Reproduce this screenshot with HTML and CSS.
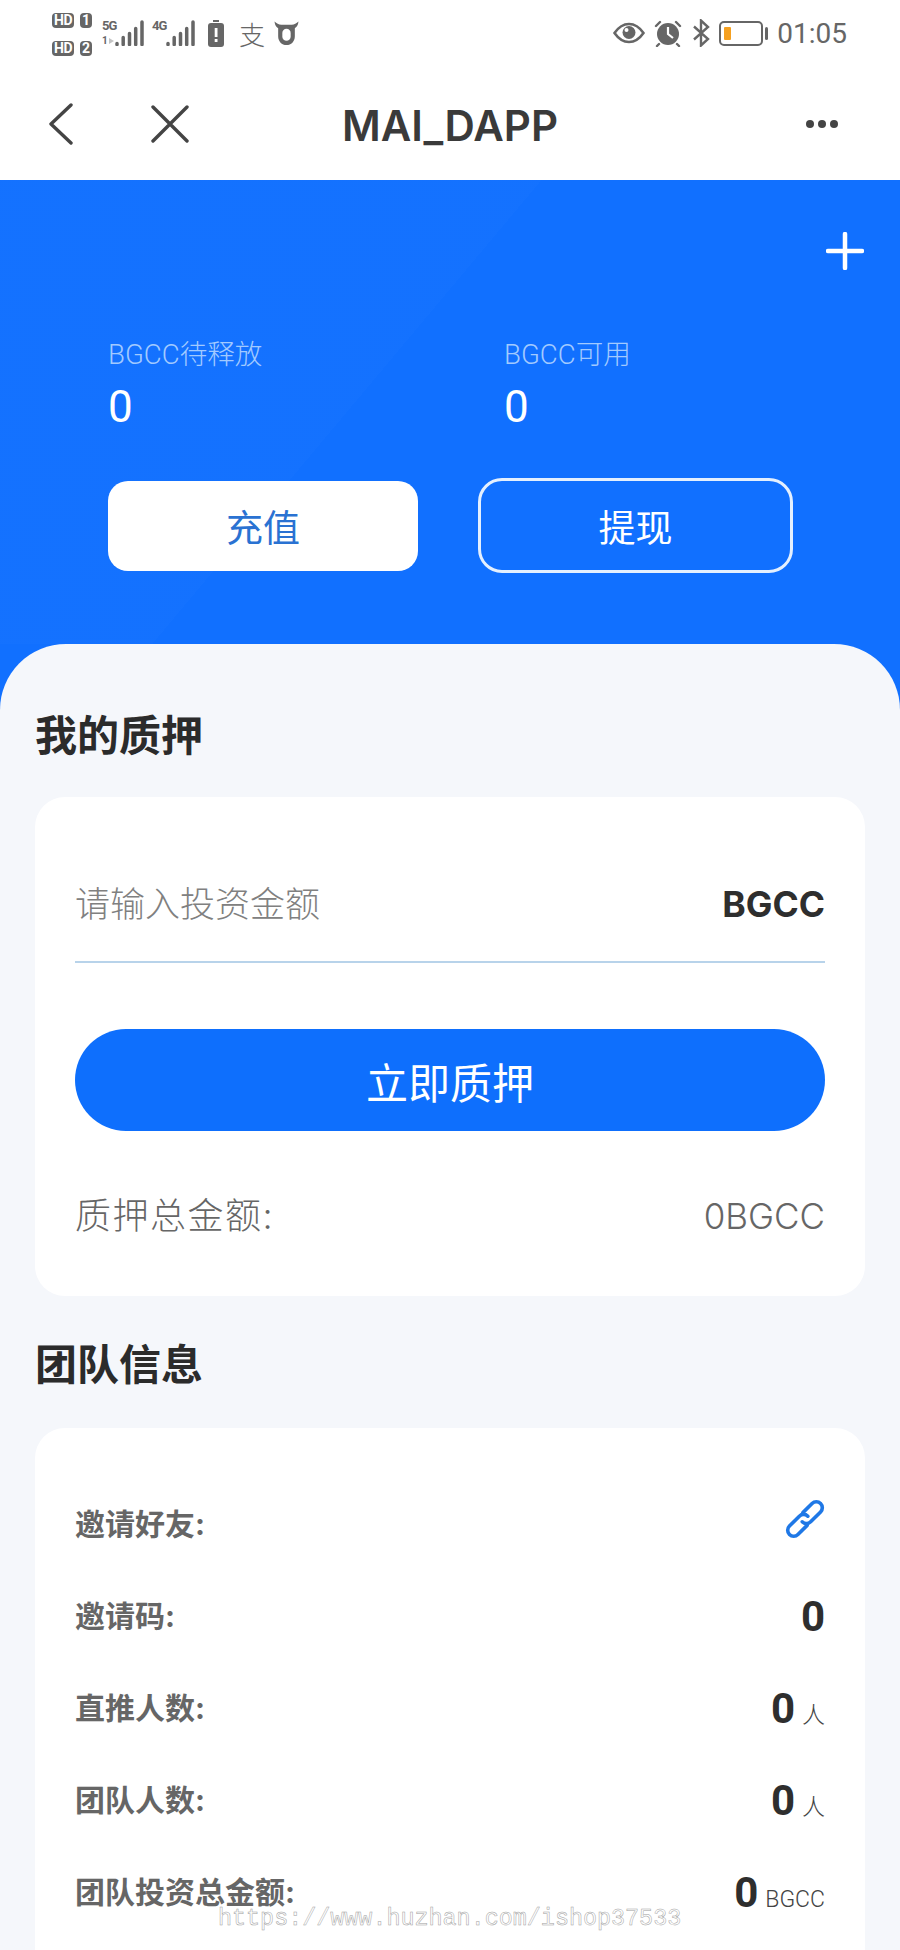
FILE: index.html
```html
<!DOCTYPE html>
<html lang="zh-CN">
<head>
  <meta charset="UTF-8" />
  <meta name="viewport" content="width=device-width, initial-scale=1" />
  <title>MAI_DAPP</title>
  <link rel="stylesheet" href="styles.css">
</head>
<body>

  <!-- Phone status bar -->
  <div class="status-bar">
    <div class="status-left">
      <div class="sim-stack">
        <div class="sim"><span class="sim-hd">HD</span><span class="sim-no">1</span></div>
        <div class="sim"><span class="sim-hd">HD</span><span class="sim-no">2</span></div>
      </div>
      <div class="signal signal-first">
        <div class="net">
          <span>5G</span>
          <span class="net-sub">1<i></i></span>
        </div>
        <svg width="29" height="26" viewBox="0 0 29 26"><path d="M2 24.500v-1M8.200 24.500v-7M14.500 24.500v-11M20.700 24.500v-16M27 24.500V2" stroke="#666" stroke-width="3.500" stroke-linecap="round" fill="none"/></svg>
      </div>
      <div class="signal signal-second">
        <div class="net net-wide"><span>4G</span></div>
        <svg width="29" height="26" viewBox="0 0 29 26"><path d="M2 24.500v-1M8.200 24.500v-7M14.500 24.500v-11M20.700 24.500v-16M27 24.500V2" stroke="#666" stroke-width="3.500" stroke-linecap="round" fill="none"/></svg>
      </div>
      <svg class="icon-alert" width="16" height="27" viewBox="0 0 16 27"><rect x="5" y="0" width="6" height="2" fill="#666"/><rect x="0" y="3" width="16" height="24" rx="3" fill="#666"/><rect x="6.700" y="8" width="2.800" height="9" fill="#fff"/><rect x="6.700" y="19" width="2.800" height="3" fill="#fff"/></svg>
      <span class="alipay">支</span>
      <svg class="icon-cow" width="25" height="26" viewBox="0 0 24 24"><path d="M0.500 1C1 5 2.500 6.500 4 7.500V15c0 5 3.500 8.500 8 8.500s8-3.500 8-8.500V7.500C21.500 6.500 23 5 23.500 1 21.500 3 19.500 4 17 4H7C4.500 4 2.500 3 0.500 1z" fill="#666"/><rect x="8" y="8" width="8" height="11.500" rx="4" fill="#fff"/></svg>
    </div>
    <div class="status-right">
      <svg width="32" height="22" viewBox="0 0 32 22"><path d="M1.500 11C6 4.500 10.500 2 16 2s10 2.500 14.500 9C26 17.500 21.500 20 16 20S6 17.500 1.500 11z" fill="none" stroke="#666" stroke-width="2.600"/><circle cx="16" cy="10.500" r="6.500" fill="#666"/><circle cx="13.500" cy="8" r="2" fill="#fff"/></svg>
      <svg class="icon-alarm" width="28" height="27" viewBox="0 0 28 27"><circle cx="14" cy="14" r="11" fill="#666"/><path d="M14 7v7l5 4" stroke="#fff" stroke-width="2.200" fill="none"/><path d="M2 6l4-4M26 6l-4-4M5 24l-2 2M23 24l2 2" stroke="#666" stroke-width="2.400" stroke-linecap="round"/></svg>
      <svg class="icon-bt" width="18" height="28" viewBox="0 0 18 28"><path d="M2 7.500l14 12.500-7 6.500V1.500l7 6.500L2 20.500" fill="none" stroke="#666" stroke-width="2.400"/></svg>
      <div class="battery"><div class="battery-level"></div></div>
      <div class="battery-nub"></div>
      <span class="clock">01:05</span>
    </div>
  </div>

  <!-- Webview title bar -->
  <header class="title-bar">
    <div class="nav-left">
      <svg width="26" height="42" viewBox="0 0 26 42"><path d="M23 2L3 21l20 19" fill="none" stroke="#444" stroke-width="3.400" stroke-linecap="round" stroke-linejoin="round"/></svg>
      <svg class="nav-close" width="38" height="38" viewBox="0 0 38 38"><path d="M2 2l34 34M36 2L2 36" fill="none" stroke="#444" stroke-width="3.400" stroke-linecap="round"/></svg>
    </div>
    <h1 class="title">MAI_DAPP</h1>
    <div class="more"><i></i><i></i><i></i></div>
  </header>

  <!-- Balance area -->
  <section class="hero">
    <div class="hero-top">
      <svg width="38" height="38" viewBox="0 0 38 38"><path d="M19 2v34M2 19h34" stroke="#fff" stroke-width="4.500" stroke-linecap="round"/></svg>
    </div>
    <div class="balances">
      <div class="balance">
        <div class="balance-label">BGCC待释放</div>
        <div class="balance-value">0</div>
      </div>
      <div class="balance">
        <div class="balance-label">BGCC可用</div>
        <div class="balance-value">0</div>
      </div>
    </div>
    <div class="hero-actions">
      <button class="btn-recharge">充值</button>
      <button class="btn-withdraw">提现</button>
    </div>
  </section>

  <main class="panel">
    <h2 class="section-title">我的质押</h2>
    <div class="card stake-card">
      <div class="amount-field">
        <span class="amount-placeholder">请输入投资金额</span>
        <span class="amount-unit">BGCC</span>
      </div>
      <button class="btn-stake">立即质押</button>
      <div class="stake-total">
        <span class="stake-total-label">质押总金额:</span>
        <span>0BGCC</span>
      </div>
    </div>

    <h2 class="section-title team-title">团队信息</h2>
    <div class="card team-card">
      <div class="team-row">
        <span class="team-label">邀请好友:</span>
        <svg class="icon-link" width="40" height="40" viewBox="0 0 40 40"><g fill="none" stroke="#1f78e6" stroke-width="3.600" stroke-linecap="round" transform="rotate(45 20 20)"><path d="M14 17V4a6 6 0 0 1 12 0v14a6 6 0 0 1-6 6"/><path d="M26 23v13a6 6 0 0 1-12 0V22a6 6 0 0 1 6-6"/></g></svg>
      </div>
      <div class="team-row">
        <span class="team-label">邀请码:</span>
        <span class="team-value">0</span>
      </div>
      <div class="team-row">
        <span class="team-label">直推人数:</span>
        <span class="team-value">0<small>人</small></span>
      </div>
      <div class="team-row">
        <span class="team-label">团队人数:</span>
        <span class="team-value">0<small>人</small></span>
      </div>
      <div class="team-row">
        <span class="team-label">团队投资总金额:</span>
        <span class="team-value">0<small>BGCC</small></span>
      </div>
    </div>
  </main>

  <div class="watermark">https://www.huzhan.com/ishop37533</div>

</body>
</html>
```

FILE: styles.css
```css
/* Reset and base */
* {
  box-sizing: border-box;
}
html,
body {
  height: 1950px;
  overflow: hidden;
}
body {
  margin: 0;
  position: relative;
  background-color: #1170ff;
  font-family: Inter, 'Noto Sans CJK SC', sans-serif;
  color: #333;
}
h1,
h2 {
  margin: 0;
}
button {
  font-family: inherit;
  cursor: pointer;
}

/* Status bar */
.status-bar {
  height: 65px;
  background-color: #fff;
  display: flex;
  justify-content: space-between;
  padding: 0 53px 0 52px;
}
.status-left,
.status-right {
  display: flex;
  align-items: flex-start;
}
.sim-stack {
  padding-top: 13px;
  display: flex;
  flex-direction: column;
  gap: 13px;
}
.sim {
  display: flex;
  gap: 6px;
  height: 15px;
}
.sim-hd,
.sim-no {
  background-color: #666;
  color: #fff;
  border-radius: 4px;
  font: 700 14px/15px 'Roboto', sans-serif;
  text-align: center;
}
.sim-hd {
  width: 22px;
  letter-spacing: -0.5px;
}
.sim-no {
  width: 12px;
}
.signal {
  display: flex;
  padding-top: 20px;
}
.signal-first {
  margin-left: 10px;
}
.signal-second {
  margin-left: 8px;
}
.net {
  display: flex;
  flex-direction: column;
  width: 13px;
  font: 700 13px/12px 'Roboto', sans-serif;
  letter-spacing: -1px;
  color: #666;
}
.net-wide {
  width: 14px;
}
.net-sub {
  display: flex;
  align-items: center;
  margin-top: 4px;
  font-size: 10px;
  line-height: 10px;
}
.net-sub i {
  margin-left: 2px;
  border-left: 5px solid #c4c4c4;
  border-top: 3.500px solid transparent;
  border-bottom: 3.500px solid transparent;
}
.icon-alert {
  margin: 20px 0 0 13px;
}
.alipay {
  margin: 16px 0 0 15px;
  font: 300 26px/36px 'Noto Sans CJK SC', sans-serif;
  color: #666;
}
.icon-cow {
  margin: 20px 0 0 9px;
}
.status-right {
  padding-top: 22px;
}
.icon-alarm {
  margin: -2px 0 0 9px;
}
.icon-bt {
  margin: -3px 0 0 10px;
}
.battery {
  width: 44px;
  height: 25px;
  margin: -1px 0 0 9px;
  border: 2px solid #666;
  border-radius: 5px;
  padding: 4px 3px;
}
.battery-level {
  width: 7px;
  height: 100%;
  background-color: #f5a020;
  border-radius: 1px;
}
.battery-nub {
  width: 3px;
  height: 13px;
  margin: 5px 0 0 2px;
  background-color: #666;
  border-radius: 2px;
}
.clock {
  margin: -6px 0 0 9px;
  font: 400 28px/36px 'Roboto', sans-serif;
  color: #666;
}

/* Title bar */
.title-bar {
  height: 115px;
  background-color: #fff;
  display: grid;
  grid-template-columns: 1fr auto 1fr;
  align-items: center;
  padding: 0 62px 0 48px;
}
.nav-left {
  display: flex;
  align-items: center;
  margin-top: 2px;
}
.nav-close {
  margin-left: 77px;
}
.title {
  margin: 5px 0 0 14px;
  font-size: 42px;
  font-weight: 600;
  color: #3a3a3a;
}
.more {
  display: flex;
  justify-content: flex-end;
  gap: 4px;
  margin-top: 2px;
}
.more i {
  width: 8px;
  height: 8px;
  border-radius: 50%;
  background-color: #444;
}

/* Hero */
.hero {
  height: 464px;
  padding: 0 36px 0 108px;
  background-color: #1170ff;
  background-image: linear-gradient(130deg, rgba(255, 255, 255, 0.012) 0 42%, rgba(255, 255, 255, 0) 42%);
}
.hero-top {
  display: flex;
  justify-content: flex-end;
  padding-top: 52px;
  height: 150px;
}
.balances {
  display: grid;
  grid-template-columns: 396px 1fr;
}
.balance-label {
  font-family: Roboto, 'Noto Sans CJK SC', sans-serif;
  font-size: 27.600px;
  line-height: 50px;
  font-weight: 300;
  color: #a2caff;
}
.balance-value {
  font-family: Roboto, sans-serif;
  font-size: 44px;
  line-height: 54px;
  color: #fff;
}
.hero-actions {
  display: flex;
  align-items: center;
  gap: 60px;
  margin-top: 44px;
}
.hero-actions button {
  font-size: 37px;
}
.btn-recharge {
  width: 310px;
  height: 90px;
  background-color: #fff;
  color: #2a72d2;
  border: none;
  border-radius: 20px;
}
.btn-withdraw {
  width: 315px;
  height: 95px;
  background-color: transparent;
  color: #fff;
  border: 3px solid #e4f0ff;
  border-radius: 24px;
}

/* Light panel */
.panel {
  height: 1306px;
  padding: 0 35px;
  background-color: #f5f7fb;
  border-radius: 66px 66px 0 0;
}
.section-title {
  padding-top: 60px;
  height: 153px;
  font-size: 42px;
  line-height: 64px;
  font-weight: 700;
  color: #2b2b2b;
}
.team-title {
  padding-top: 37px;
  height: 132px;
}
.card {
  background-color: #fff;
  border-radius: 30px;
  padding: 0 40px;
}
.stake-card {
  height: 499px;
}
.amount-field {
  height: 166px;
  padding-top: 64px;
  display: flex;
  justify-content: space-between;
  align-items: flex-start;
  border-bottom: 2px solid #b8d3ea;
}
.amount-placeholder {
  font-size: 35px;
  line-height: 86px;
  font-weight: 300;
  color: #808080;
}
.amount-unit {
  font-size: 35.500px;
  line-height: 86px;
  margin-top: 1px;
  font-weight: 700;
  color: #2e2e2e;
}
.btn-stake {
  display: block;
  width: 100%;
  height: 102px;
  margin-top: 66px;
  border: none;
  border-radius: 51px;
  background-color: #0e6ffd;
  color: #fff;
  font-size: 42px;
}
.stake-total {
  display: flex;
  justify-content: space-between;
  margin-top: 56px;
  font-size: 35px;
  line-height: 58px;
  font-weight: 300;
  color: #666;
}
.stake-total-label {
  font-size: 36px;
  letter-spacing: 1.500px;
}
.team-card {
  height: 560px;
  padding-top: 48px;
}
.team-row {
  height: 92px;
  display: flex;
  justify-content: space-between;
  align-items: center;
}
.team-label {
  font-size: 30px;
  font-weight: 700;
  color: #666;
}
.icon-link {
  margin: -6px 0 0 0;
  overflow: visible;
}
.team-value {
  padding-top: 4px;
  font-family: Roboto, sans-serif;
  font-size: 42px;
  font-weight: 700;
  color: #2e2e2e;
}
.team-value small {
  margin-left: 7px;
  font-family: Roboto, 'Noto Sans CJK SC', sans-serif;
  font-size: 23px;
  font-weight: 300;
  color: #444;
}

/* Site watermark over the page */
.watermark {
  position: absolute;
  left: 218px;
  top: 1904px;
  font-family: 'Liberation Mono', monospace;
  font-size: 23.400px;
  line-height: 30px;
  color: #fff;
  -webkit-text-stroke: 0.500px #a0a0a0;
}
```
